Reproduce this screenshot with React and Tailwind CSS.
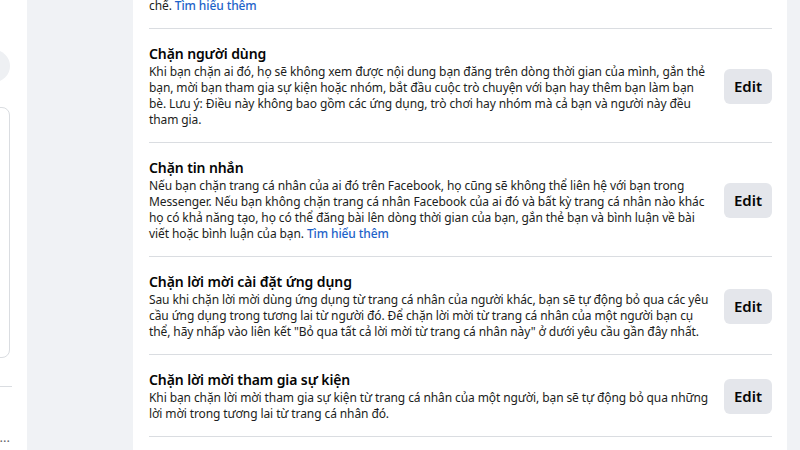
const sections = [
  {
    title: 'Chặn người dùng',
    lines: [
      'Khi bạn chặn ai đó, họ sẽ không xem được nội dung bạn đăng trên dòng thời gian của mình, gắn thẻ',
      'bạn, mời bạn tham gia sự kiện hoặc nhóm, bắt đầu cuộc trò chuyện với bạn hay thêm bạn làm bạn',
      'bè. Lưu ý: Điều này không bao gồm các ứng dụng, trò chơi hay nhóm mà cả bạn và người này đều',
      'tham gia.',
    ],
  },
  {
    title: 'Chặn tin nhắn',
    lines: [
      'Nếu bạn chặn trang cá nhân của ai đó trên Facebook, họ cũng sẽ không thể liên hệ với bạn trong',
      'Messenger. Nếu bạn không chặn trang cá nhân Facebook của ai đó và bất kỳ trang cá nhân nào khác',
      'họ có khả năng tạo, họ có thể đăng bài lên dòng thời gian của bạn, gắn thẻ bạn và bình luận về bài',
      'viết hoặc bình luận của bạn.',
    ],
    link: true,
  },
  {
    title: 'Chặn lời mời cài đặt ứng dụng',
    lines: [
      'Sau khi chặn lời mời dùng ứng dụng từ trang cá nhân của người khác, bạn sẽ tự động bỏ qua các yêu',
      'cầu ứng dụng trong tương lai từ người đó. Để chặn lời mời từ trang cá nhân của một người bạn cụ',
      'thể, hãy nhấp vào liên kết "Bỏ qua tất cả lời mời từ trang cá nhân này" ở dưới yêu cầu gần đây nhất.',
    ],
  },
  {
    title: 'Chặn lời mời tham gia sự kiện',
    lines: [
      'Khi bạn chặn lời mời tham gia sự kiện từ trang cá nhân của một người, bạn sẽ tự động bỏ qua những',
      'lời mời trong tương lai từ trang cá nhân đó.',
    ],
  },
];

const Link = () => (
  <span className="text-[#1d63c9] font-medium"> Tìm hiểu thêm</span>
);

const Section = ({ title, lines, link }) => (
  <div className="flex items-center gap-3 border-b border-[#dadde1] pt-[15px] pb-[14px]">
    <div className="flex-1 min-w-0">
      <div className="text-[14px] leading-[20px] font-semibold tracking-[-0.1px] text-[#050505]">{title}</div>
      {lines.map((line, i) => (
        <div key={i} className="text-[12px] leading-[16px] tracking-[-0.1px] text-[#1c1e21] whitespace-nowrap">
          {line}
          {link && i === lines.length - 1 && <Link />}
        </div>
      ))}
    </div>
    <button className="w-[48px] h-[35px] rounded-md bg-[#e4e6eb] text-[15px] font-semibold text-[#050505] shrink-0">
      Edit
    </button>
  </div>
);

export default function App() {
  return (
    <div
      className="flex w-[800px] h-[450px] overflow-hidden bg-[#f0f2f5]"
      style={{ fontFamily: '"Noto Sans", "Segoe UI", Roboto, sans-serif' }}
    >
      {/* clipped left sidebar */}
      <div className="w-[27px] shrink-0 bg-white overflow-hidden">
        <div className="w-[210px] -ml-[200px] flex flex-col">
          <div className="h-[50px]" />
          <div className="self-end w-[32px] h-[32px] rounded-full bg-[#eef0f3]" />
          <div className="mt-[25px] h-[251px] rounded-lg border border-[#dadde1]" />
          <div className="mt-[28px] -mr-[2px] h-px bg-[#dadde1]" />
          <div className="mt-[42px] text-right text-[13px] leading-[16px] text-[#65676b]">...</div>
        </div>
      </div>

      {/* grey gutter */}
      <div className="w-[106px] shrink-0" />

      {/* settings panel */}
      <div className="w-[654px] shrink-0 bg-white pl-4 pr-[15px]">
        <div className="border-b border-[#dadde1] -mt-[2px] pb-[14px]">
          <div className="text-[12px] leading-[16px] tracking-[-0.1px] text-[#1c1e21]">
            chế.
            <Link />
          </div>
        </div>
        {sections.map((s) => (
          <Section key={s.title} {...s} />
        ))}
      </div>
    </div>
  );
}
